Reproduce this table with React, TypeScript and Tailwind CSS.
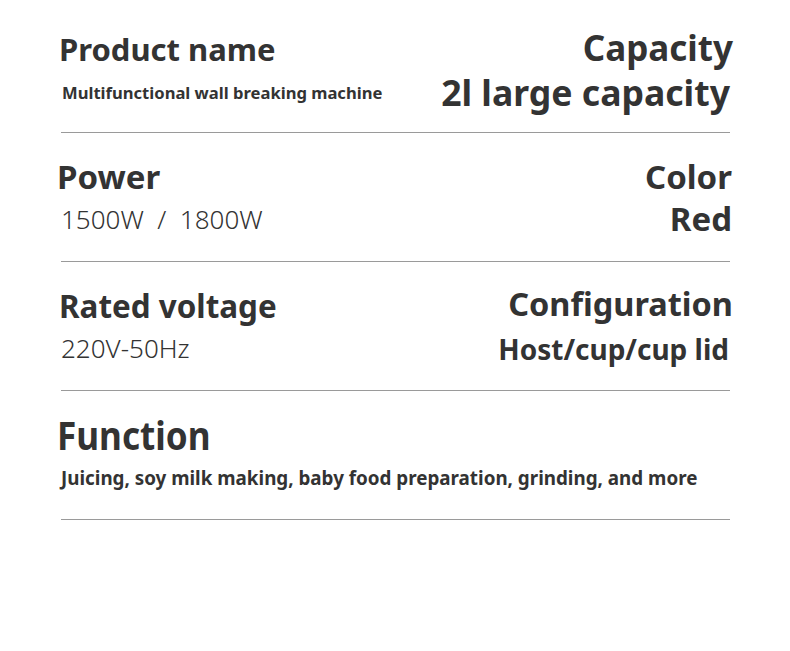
import React from "react";

const font = { fontFamily: '"Noto Sans", "Open Sans", sans-serif' };

function Line() {
  return <div className="ml-[61px] mr-[60px] h-px bg-[#9a9a9a]" />;
}

export default function App() {
  return (
    <div className="w-[790px] h-[651px] bg-white text-[#333333]" style={font}>
      <div className="pt-[4px]">
        {/* Section 1 */}
        <div className="h-[128px] flex justify-between pl-[59px] pr-[57px]">
          <div className="flex flex-col">
            <div className="text-[31px] font-bold leading-[38px] mt-[26px]">Product name</div>
            <div className="text-[16.6px] font-bold leading-[20px] mt-[15px] ml-[3px]">Multifunctional wall breaking machine</div>
          </div>
          <div className="flex flex-col items-end">
            <div className="text-[35px] font-bold leading-[40px] mt-[24px]">Capacity</div>
            <div className="text-[35.6px] font-bold leading-[40px] mr-[3px] mt-[4px]">2l large capacity</div>
          </div>
        </div>
        <Line />
        {/* Section 2 */}
        <div className="h-[128px] flex justify-between pl-[57px] pr-[58px]">
          <div className="flex flex-col">
            <div className="text-[33px] font-bold leading-[40px] mt-[24px]">Power</div>
            <div className="text-[26px] font-light leading-[32px] mt-[6px] ml-[4px] whitespace-nowrap">1500W &nbsp;/&nbsp; 1800W</div>
          </div>
          <div className="flex flex-col items-end">
            <div className="text-[33px] font-bold leading-[40px] mt-[24px]">Color</div>
            <div className="text-[33px] font-bold leading-[40px] mt-[2px]">Red</div>
          </div>
        </div>
        <Line />
        {/* Section 3 */}
        <div className="h-[128px] flex justify-between pl-[59px] pr-[57px]">
          <div className="flex flex-col">
            <div className="text-[31.4px] font-bold leading-[38px] mt-[25px]">Rated voltage</div>
            <div className="text-[26px] font-light leading-[32px] mt-[7px] ml-[2px] whitespace-nowrap">220V-50Hz</div>
          </div>
          <div className="flex flex-col items-end">
            <div className="text-[32.5px] font-bold leading-[40px] mt-[22px]">Configuration</div>
            <div className="text-[28px] font-bold leading-[34px] mt-[8px] mr-[4px]">Host/cup/cup lid</div>
          </div>
        </div>
        <Line />
        {/* Section 4 */}
        <div className="h-[128px] flex flex-col pl-[57px]">
          <div className="text-[39px] font-bold leading-[44px] mt-[22px] origin-left scale-x-[0.9] whitespace-nowrap">Function</div>
          <div className="text-[20px] font-bold leading-[26px] mt-[8px] ml-[4px] origin-left scale-x-[0.94] whitespace-nowrap">Juicing, soy milk making, baby food preparation, grinding, and more</div>
        </div>
        <Line />
      </div>
    </div>
  );
}
